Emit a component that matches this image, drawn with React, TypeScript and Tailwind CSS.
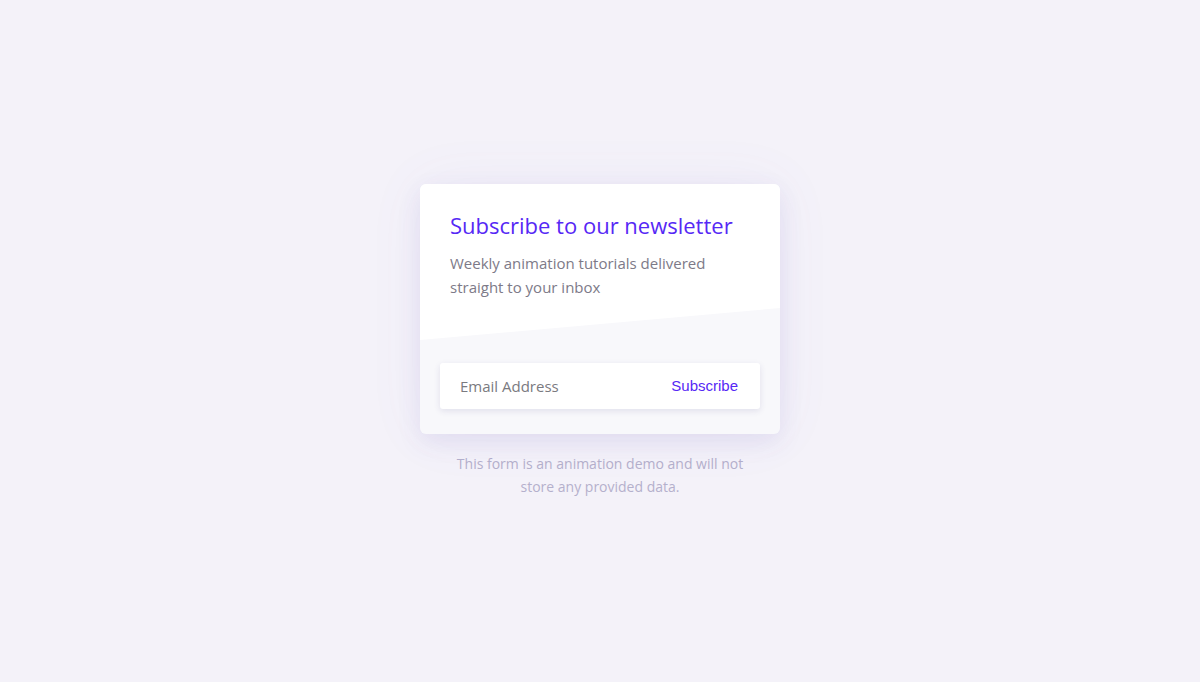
import React from "react";

export default function App() {
  return (
    <div
      className="w-full h-[682px] bg-[#f4f2f9] flex flex-col items-center justify-center"
      style={{ fontFamily: '"Open Sans", sans-serif' }}
    >
      <div className="w-[360px] h-[250px] rounded-[6px] bg-[#f8f8fb] relative overflow-hidden flex flex-col shadow-[0_8px_24px_rgba(90,70,180,0.10),0_0_60px_rgba(120,100,200,0.06)]">
        <div
          className="absolute inset-x-0 top-0 h-[156px] bg-white"
          style={{ clipPath: "polygon(0 0, 100% 0, 100% 124px, 0 156px)" }}
        />
        <div className="relative px-[30px] pt-[26px]">
          <h1 className="text-[22px] leading-[30px] text-[#5628f5] font-normal">
            Subscribe to our newsletter
          </h1>
          <p className="mt-[11px] text-[15px] leading-[24px] text-[#7d7a88]">
            Weekly animation tutorials delivered straight to your inbox
          </p>
        </div>
        <div className="relative mx-[20px] mt-[64px] h-[46px] bg-white rounded-[3px] shadow-[0_2px_6px_rgba(60,50,120,0.12)] flex items-center justify-between pl-[20px] pr-[22px]">
          <span className="text-[15px] text-[#7a7a80]">Email Address</span>
          <span
            className="text-[15px] text-[#5628f5]"
            style={{ fontFamily: '"Liberation Sans", Arial, sans-serif' }}
          >
            Subscribe
          </span>
        </div>
      </div>
      <p className="mt-[18px] w-[300px] text-center text-[14px] leading-[23px] text-[#b4b0cc]">
        This form is an animation demo and will not store any provided data.
      </p>
    </div>
  );
}
